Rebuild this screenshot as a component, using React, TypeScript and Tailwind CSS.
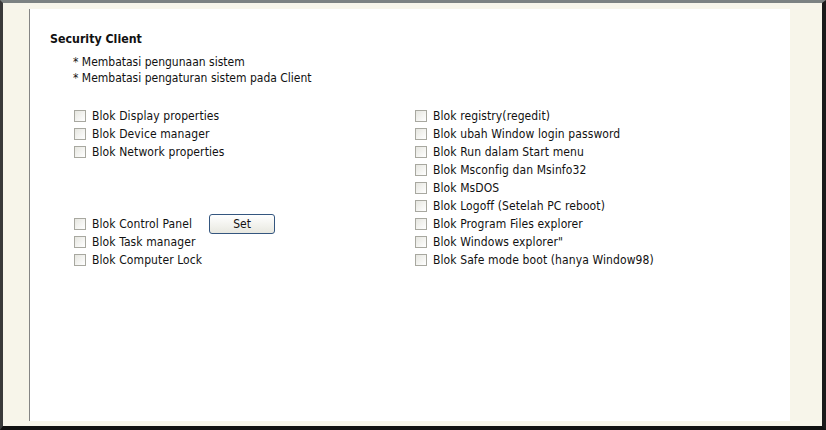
const LEFT: (string | null)[] = [
  "Blok Display properties",
  "Blok Device manager",
  "Blok Network properties",
  null,
  null,
  null,
  "Blok Control Panel",
  "Blok Task manager",
  "Blok Computer Lock",
];

const RIGHT = [
  "Blok registry(regedit)",
  "Blok ubah Window login password",
  "Blok Run dalam Start menu",
  "Blok Msconfig dan Msinfo32",
  "Blok MsDOS",
  "Blok Logoff (Setelah PC reboot)",
  "Blok Program Files explorer",
  "Blok Windows explorer\"",
  "Blok Safe mode boot (hanya Window98)",
];

function Box() {
  return (
    <span className="block h-[12px] w-[12px] shrink-0 border border-[#a8a8a0] bg-gradient-to-br from-[#e6e6e0] to-white" />
  );
}

function Row({ label }: { label: string }) {
  return (
    <div className="flex h-[18px] items-center">
      <Box />
      <span className="ml-[6px] whitespace-nowrap tracking-[0.1px]">{label}</span>
      {label === "Blok Control Panel" && (
        <button className="ml-[17px] flex h-[20px] w-[66px] items-center justify-center rounded-[3px] border border-[#34567f] bg-gradient-to-b from-white to-[#e8e8e0] text-[12px] text-[#111]">
          Set
        </button>
      )}
    </div>
  );
}

export default function App() {
  return (
    <div className="h-[430px] w-[826px] overflow-hidden border-t-[3px] border-r-[4px] border-b-[4px] border-l-[3px] border-t-[#7c8282] border-r-[#1a1a1a] border-b-[#111] border-l-[#3a3a3a] bg-[#f7f5ea] pt-[6px] pr-[32px] pb-[5px] pl-[26px]">
      <div
        className="h-full border-l border-[#858585] bg-white pt-[22px] pl-[20px] text-[12px] text-[#111]"
        style={{ fontFamily: '"DejaVu Sans Condensed", Tahoma, "DejaVu Sans", sans-serif' }}
      >
        <div className="h-[16px] text-[12.3px] leading-[16px] font-bold">Security Client</div>
        <div className="mt-[7px] pl-[23px] leading-[16px]">
          <div>* Membatasi pengunaan sistem</div>
          <div>* Membatasi pengaturan sistem pada Client</div>
        </div>
        <div className="mt-[21px] grid grid-cols-[341px_1fr] pl-[24px]">
          <div>
            {LEFT.map((l, i) =>
              l ? <Row key={i} label={l} /> : <div key={i} className="h-[18px]" />
            )}
          </div>
          <div>
            {RIGHT.map((l) => (
              <Row key={l} label={l} />
            ))}
          </div>
        </div>
      </div>
    </div>
  );
}
